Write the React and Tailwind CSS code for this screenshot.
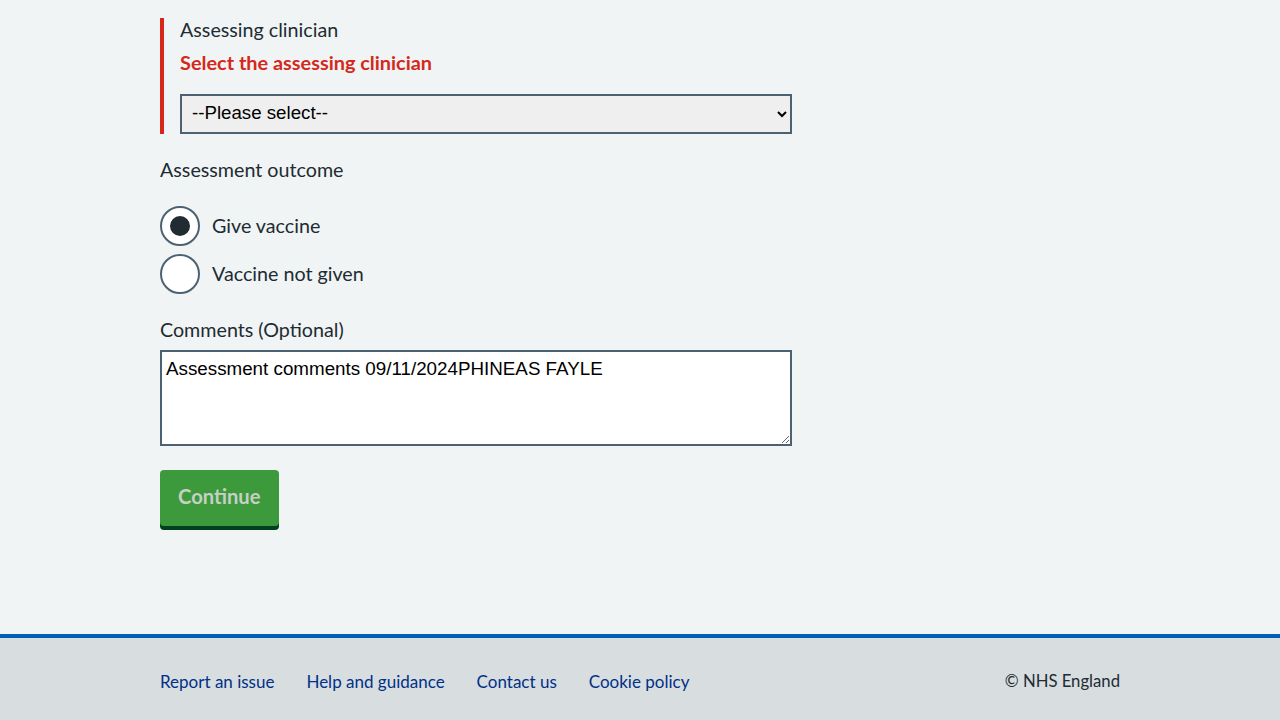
export default function App() {
  const footerLinks = ['Report an issue', 'Help and guidance', 'Contact us', 'Cookie policy'];

  return (
    <div className="min-h-screen flex flex-col bg-[#f0f4f5] text-[#212b32]" style={{ fontFamily: 'Lato, "Liberation Sans", sans-serif' }}>
      <main className="flex-1 px-[160px] pt-[18px]">
        <div className="w-[632px]">
          {/* Error group */}
          <div className="border-l-4 border-[#d5281b] pl-4">
            <label className="block text-[19.7px] leading-[24px]">Assessing clinician</label>
            <p className="mt-2 text-[19.9px] leading-[24px] font-bold text-[#d5281b]">Select the assessing clinician</p>
            <select className="mt-[20px] block w-full h-10 border-2 border-[#4c6272] bg-[#efefef] text-black text-[18.7px] pl-[6px] pb-1" style={{ fontFamily: '"Liberation Sans", sans-serif' }}>
              <option>--Please select--</option>
            </select>
          </div>

          {/* Outcome */}
          <p className="mt-6 text-[19.7px] leading-[24px]">Assessment outcome</p>
          <div className="mt-6 flex flex-col gap-2">
            <label className="flex items-center gap-3">
              <span className="w-10 h-10 rounded-full border-2 border-[#4c6272] bg-white flex items-center justify-center">
                <span className="w-5 h-5 rounded-full bg-[#212b32]" />
              </span>
              <span className="text-[19.7px]">Give vaccine</span>
            </label>
            <label className="flex items-center gap-3">
              <span className="w-10 h-10 rounded-full border-2 border-[#4c6272] bg-white" />
              <span className="text-[19.7px]">Vaccine not given</span>
            </label>
          </div>

          {/* Comments */}
          <p className="mt-6 text-[19.7px] leading-[24px]">Comments (Optional)</p>
          <textarea
            className="mt-2 block w-full h-[96px] border-2 border-[#4c6272] bg-white text-black text-[18.8px] leading-[24px] px-1 pt-[5px]"
            style={{ fontFamily: '"Liberation Sans", sans-serif' }}
            defaultValue="Assessment comments 09/11/2024PHINEAS FAYLE"
          />

          <button className="mt-6 h-14 px-[18px] pb-1 rounded-[4px] bg-[#3c9a3c] text-[#c6d0c6] text-[20.2px] font-bold shadow-[0_4px_0_#00401e]">
            Continue
          </button>
        </div>
      </main>

      <footer className="mt-[104px] border-t-4 border-[#005eb8] bg-[#d8dde0] h-[86px] px-[160px] pt-[6px] flex items-center justify-between text-[16.7px]">
        <ul className="flex">
          {footerLinks.map((link, i) => (
            <li key={link} className={i > 0 ? 'ml-8' : ''}><a className="text-[#003087] text-[17px]" href="#">{link}</a></li>
          ))}
        </ul>
        <p className="text-[#212b32]">© NHS England</p>
      </footer>
    </div>
  );
}
